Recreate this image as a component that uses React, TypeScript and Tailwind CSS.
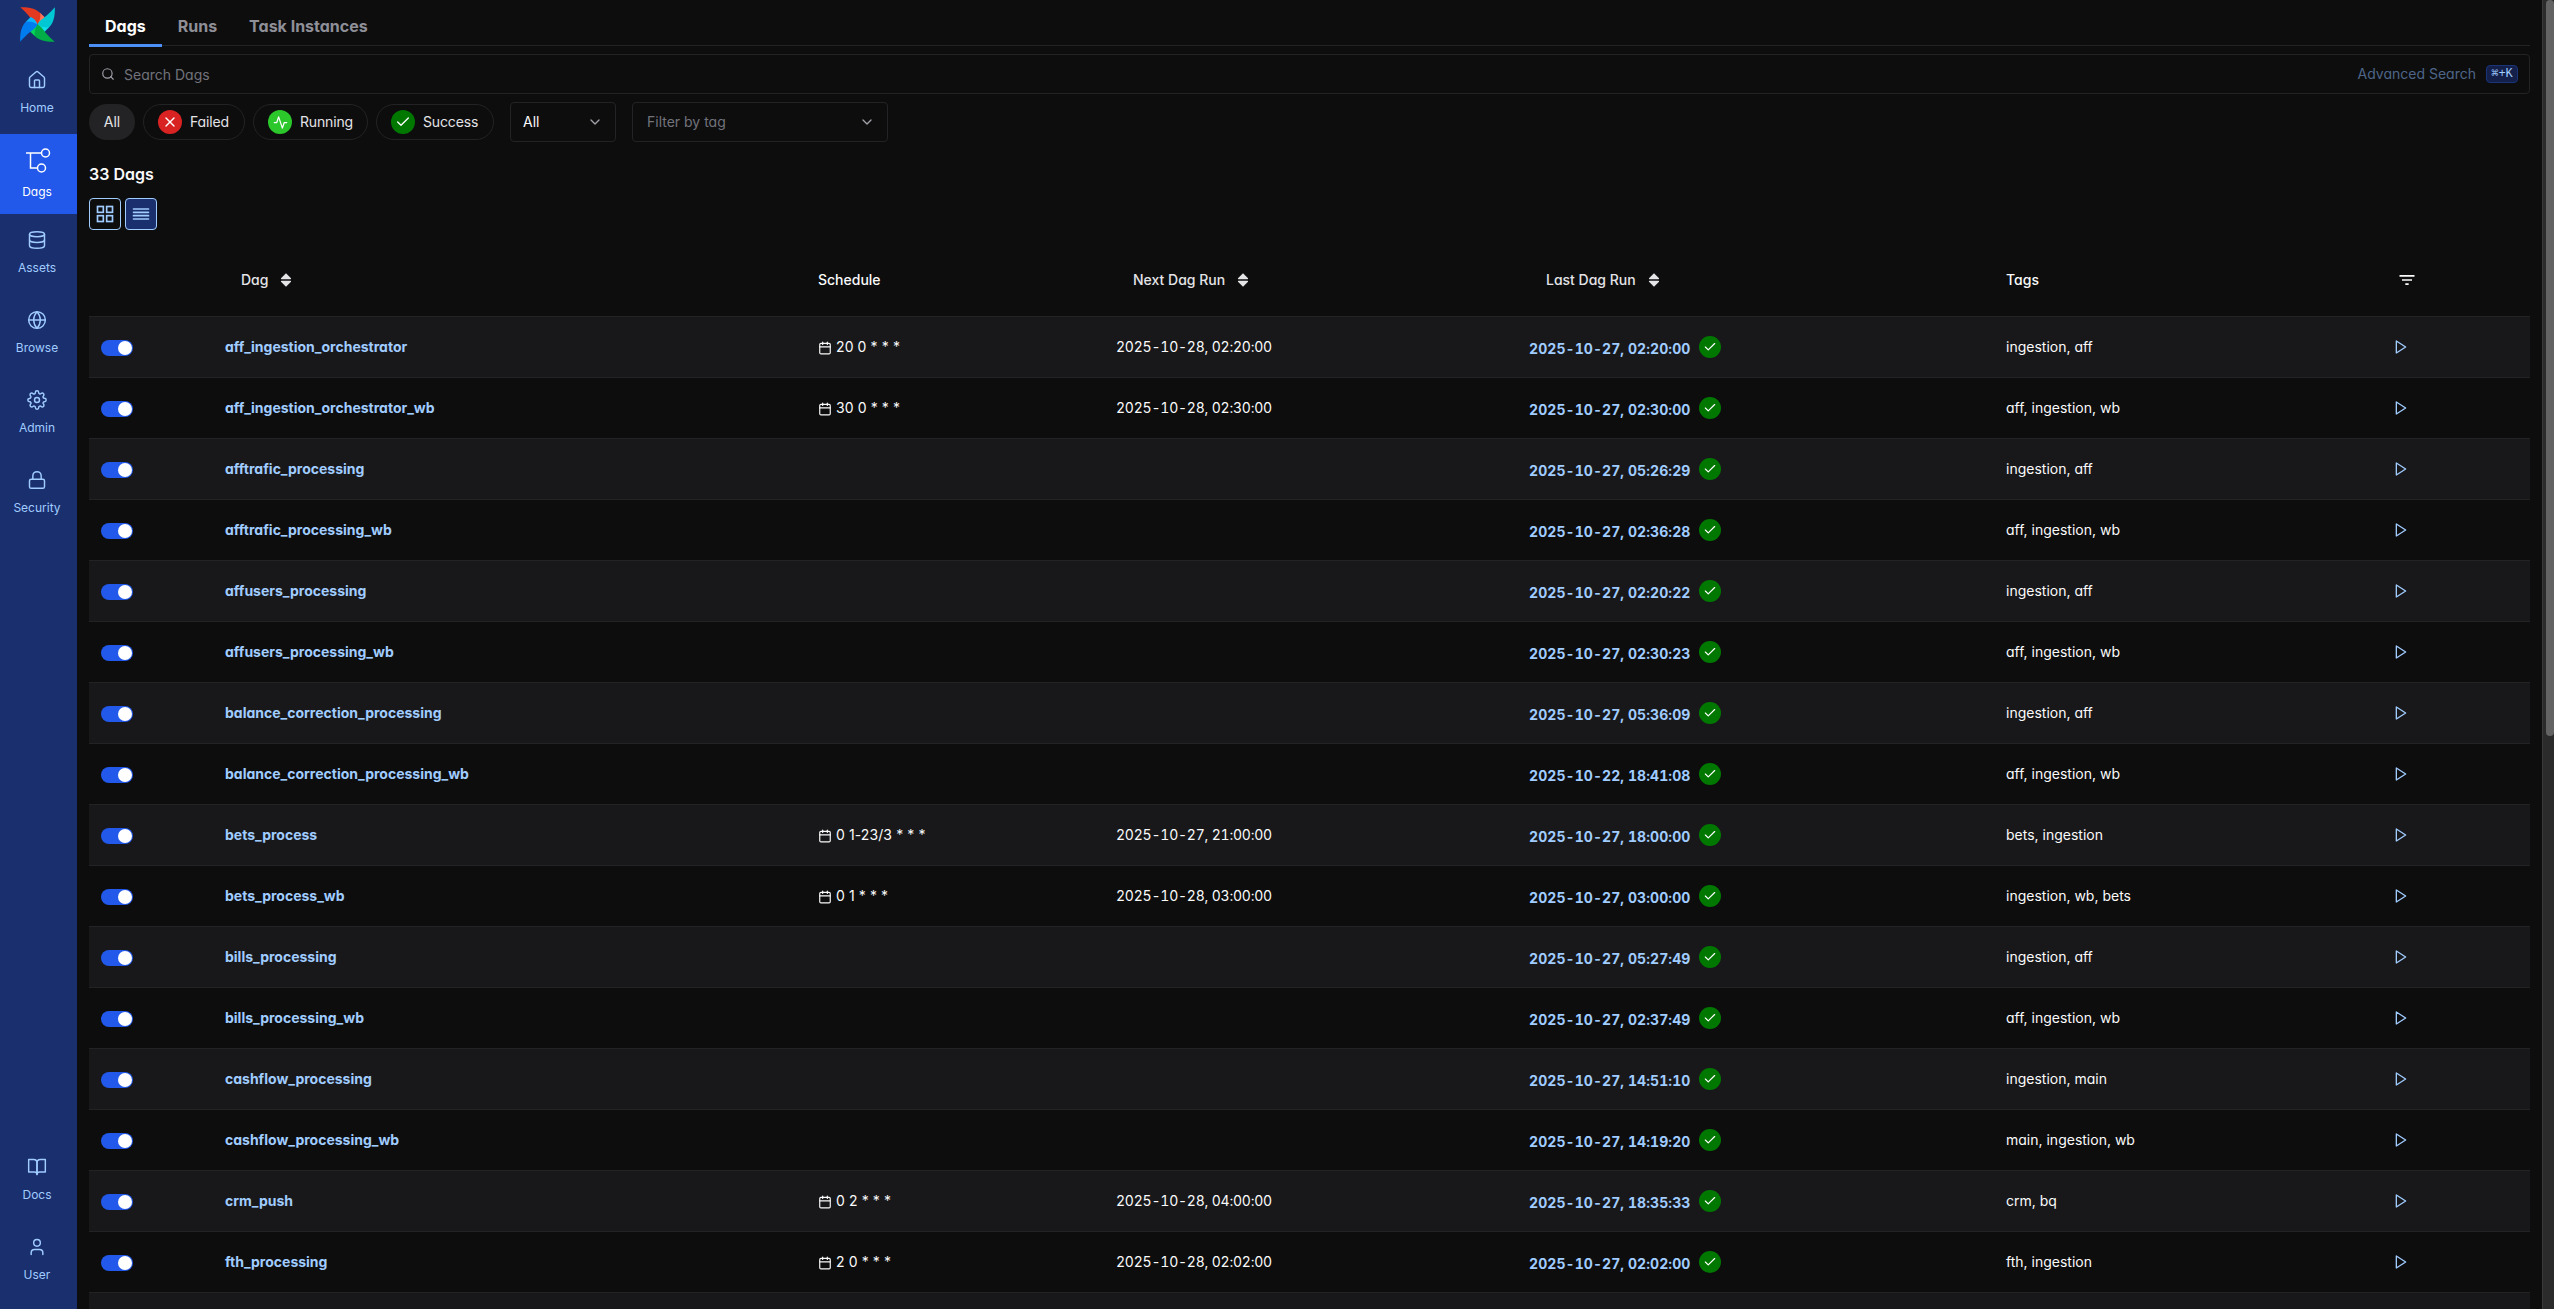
import type { ReactNode } from "react";
import {
  FiActivity,
  FiAlignJustify,
  FiBookOpen,
  FiCalendar,
  FiCheck,
  FiChevronDown,
  FiGlobe,
  FiGrid,
  FiPlay,
  FiSearch,
  FiSettings,
  FiX,
} from "react-icons/fi";
import { LuDatabase, LuHouse, LuLock, LuUser } from "react-icons/lu";
import { MdFilterList } from "react-icons/md";

type Dag = {
  name: string;
  schedule?: string;
  next?: string;
  last: string;
  tags: string;
};

const dags: Dag[] = [
  { name: "aff_ingestion_orchestrator", schedule: "20 0 * * *", next: "2025-10-28, 02:20:00", last: "2025-10-27, 02:20:00", tags: "ingestion, aff" },
  { name: "aff_ingestion_orchestrator_wb", schedule: "30 0 * * *", next: "2025-10-28, 02:30:00", last: "2025-10-27, 02:30:00", tags: "aff, ingestion, wb" },
  { name: "afftrafic_processing", last: "2025-10-27, 05:26:29", tags: "ingestion, aff" },
  { name: "afftrafic_processing_wb", last: "2025-10-27, 02:36:28", tags: "aff, ingestion, wb" },
  { name: "affusers_processing", last: "2025-10-27, 02:20:22", tags: "ingestion, aff" },
  { name: "affusers_processing_wb", last: "2025-10-27, 02:30:23", tags: "aff, ingestion, wb" },
  { name: "balance_correction_processing", last: "2025-10-27, 05:36:09", tags: "ingestion, aff" },
  { name: "balance_correction_processing_wb", last: "2025-10-22, 18:41:08", tags: "aff, ingestion, wb" },
  { name: "bets_process", schedule: "0 1-23/3 * * *", next: "2025-10-27, 21:00:00", last: "2025-10-27, 18:00:00", tags: "bets, ingestion" },
  { name: "bets_process_wb", schedule: "0 1 * * *", next: "2025-10-28, 03:00:00", last: "2025-10-27, 03:00:00", tags: "ingestion, wb, bets" },
  { name: "bills_processing", last: "2025-10-27, 05:27:49", tags: "ingestion, aff" },
  { name: "bills_processing_wb", last: "2025-10-27, 02:37:49", tags: "aff, ingestion, wb" },
  { name: "cashflow_processing", last: "2025-10-27, 14:51:10", tags: "ingestion, main" },
  { name: "cashflow_processing_wb", last: "2025-10-27, 14:19:20", tags: "main, ingestion, wb" },
  { name: "crm_push", schedule: "0 2 * * *", next: "2025-10-28, 04:00:00", last: "2025-10-27, 18:35:33", tags: "crm, bq" },
  { name: "fth_processing", schedule: "2 0 * * *", next: "2025-10-28, 02:02:00", last: "2025-10-27, 02:02:00", tags: "fth, ingestion" },
];

const columns = "grid grid-cols-[124px_593px_299px_413px_476px_1fr]";

const blades = [
  { angle: 0, main: "#e43921", light: "#ff7557" },
  { angle: 90, main: "#00c7d4", light: "#11e1ee" },
  { angle: 180, main: "#00ad46", light: "#04d659" },
  { angle: 270, main: "#017cee", light: "#0cb6ff" },
];

function Logo() {
  return (
    <svg width="35" height="35" viewBox="0 0 35 35">
      {blades.map((b) => (
        <g key={b.angle} transform={`rotate(${b.angle} 17.5 17.5)`}>
          <path fill={b.light} d="M20 5.7 L25 10.6 C24.2 13.4 21.5 16 17.5 17.5 Z" />
          <path
            fill={b.main}
            d="M0.2 0.2 C8 -0.2 15.5 1.2 20 5.7 C21 9.5 20 13.5 17.5 17.5 C11.5 14.5 13 11.5 0.2 0.2 Z"
          />
        </g>
      ))}
    </svg>
  );
}

function DagIcon() {
  return (
    <svg width="28" height="28" viewBox="0 0 28 28" fill="none" stroke="currentColor" strokeWidth="1.5">
      <path d="M3 7h15.5M7.5 7v15h7" />
      <circle cx="22.5" cy="7" r="4" />
      <circle cx="18.5" cy="22" r="4" />
    </svg>
  );
}

function SortIcon() {
  return (
    <svg width="12" height="14" viewBox="0 0 12 14" fill="currentColor">
      <path d="M6 0.2 11 5.2Q11.4 6.2 10.4 6.2H1.6Q0.6 6.2 1 5.2Z" />
      <path d="M6 13.8 11 8.8Q11.4 7.8 10.4 7.8H1.6Q0.6 7.8 1 8.8Z" />
    </svg>
  );
}

function NavItem({ icon, label, active }: { icon: ReactNode; label: string; active?: boolean }) {
  return (
    <a
      className={`flex h-20 w-full flex-col items-center justify-center gap-2.5 pr-[3px] pb-0.5 text-xs ${
        active ? "bg-[#2259ea] text-white" : "text-[#a0ccff]"
      }`}
    >
      {icon}
      <span className="leading-4">{label}</span>
    </a>
  );
}

function Pill({ className, color, icon, label }: { className: string; color: string; icon: ReactNode; label: string }) {
  return (
    <button
      className={`flex h-9 items-center gap-2 rounded-full border border-[#232325] pl-3.5 tracking-[-0.15px] text-[#e4e4e7] ${className}`}
    >
      <span className={`flex size-6 items-center justify-center rounded-full text-white ${color}`}>{icon}</span>
      {label}
    </button>
  );
}

function SortHeader({ label }: { label: string }) {
  return (
    <span className="flex items-center gap-3 pl-7 text-[#e4e4e7]">
      {label}
      <SortIcon />
    </span>
  );
}

function DagRow({ dag }: { dag: Dag }) {
  return (
    <div className={`${columns} h-[61px] shrink-0 items-center border-t border-[#232325] odd:bg-[#18181a]`}>
      <div className="pt-0.5 pl-3">
        <div className="flex h-4 w-8 items-center justify-end rounded-full bg-[#2259ea] pr-px">
          <span className="size-3.5 rounded-full bg-white" />
        </div>
      </div>
      <a className="pl-3 font-bold text-[#a0ccff]">{dag.name}</a>
      <div className="flex items-center gap-1 pl-3">
        {dag.schedule && (
          <>
            <FiCalendar size={14} className="mt-0.5" />
            <span className="tracking-[0.1px]">{dag.schedule}</span>
          </>
        )}
      </div>
      <div className="pl-[11px] tracking-[-0.22px] tabular-nums">{dag.next}</div>
      <div className="flex items-center gap-2 pl-[11px]">
        <a className="w-[162px] pt-1 font-bold tracking-[0.08px] whitespace-nowrap text-[#a0ccff] tabular-nums">
          {dag.last}
        </a>
        <span className="flex size-[22px] items-center justify-center rounded-full bg-[#007800] text-white">
          <FiCheck size={14} />
        </span>
      </div>
      <div className="flex items-center pl-3">
        <span className="w-[387px]">{dag.tags}</span>
        <FiPlay size={16} className="text-[#a0ccff]" />
      </div>
    </div>
  );
}

export default function App() {
  return (
    <div className="flex h-[1309px] w-[2554px] overflow-hidden bg-[#0d0d0e] font-['Inter',sans-serif] text-sm text-[#fafafa] [font-feature-settings:'cv11']">
      <nav className="flex w-[77px] shrink-0 flex-col items-center justify-between bg-[#1a2f6e] pb-2">
        <div className="flex w-full flex-col items-center">
          <div className="flex h-[54px] w-full pt-[7px] pl-5">
            <Logo />
          </div>
          <NavItem icon={<LuHouse size={20} strokeWidth={1.75} />} label="Home" />
          <NavItem icon={<DagIcon />} label="Dags" active />
          <NavItem icon={<LuDatabase size={20} strokeWidth={1.75} />} label="Assets" />
          <NavItem icon={<FiGlobe size={20} strokeWidth={1.75} />} label="Browse" />
          <NavItem icon={<FiSettings size={20} strokeWidth={1.75} />} label="Admin" />
          <NavItem icon={<LuLock size={20} strokeWidth={1.75} />} label="Security" />
        </div>
        <div className="flex w-full flex-col items-center">
          <NavItem icon={<FiBookOpen size={20} strokeWidth={1.75} />} label="Docs" />
          <NavItem icon={<LuUser size={20} strokeWidth={1.75} />} label="User" />
        </div>
      </nav>

      <main className="flex min-w-0 flex-1 flex-col px-3">
        <div className="flex h-[46px] shrink-0 border-b border-[#232325] text-base font-bold text-[#8f8f98]">
          <a className="h-[47px] border-b-3 border-[#4b8ff7] px-4 pt-[14px] text-white">Dags</a>
          <a className="px-4 pt-[14px]">Runs</a>
          <a className="px-4 pt-[14px]">Task Instances</a>
        </div>

        <div className="mt-2 flex h-10 shrink-0 items-center rounded border border-[#232325] px-[11px]">
          <FiSearch size={14} className="text-[#a1a1aa]" />
          <span className="ml-[9px] flex-1 pt-0.5 text-[#72727b]">Search Dags</span>
          <span className="mr-2.5 text-[#4d6688]">Advanced Search</span>
          <kbd className="flex h-[18px] w-8 items-center justify-center rounded border border-[#1a3478] bg-[#14204a] font-['Liberation_Mono',monospace] text-xs text-[#a0ccff]">
            ⌘+K
          </kbd>
        </div>

        <div className="mt-2 flex h-10 shrink-0 items-center">
          <div className="flex gap-2">
            <button className="h-9 w-[46px] rounded-full bg-[#232325] text-[#e4e4e7]">All</button>
            <Pill className="w-[102px]" color="bg-[#d92323]" icon={<FiX size={16} />} label="Failed" />
            <Pill className="w-[115px]" color="bg-[#2bc72b]" icon={<FiActivity size={15} />} label="Running" />
            <Pill className="w-[118px]" color="bg-[#007800]" icon={<FiCheck size={16} />} label="Success" />
          </div>
          <div className="ml-4 flex h-10 w-[106px] items-center justify-between rounded border border-[#232325] px-3">
            All
            <FiChevronDown size={16} className="text-[#a1a1aa]" />
          </div>
          <div className="ml-4 flex h-10 w-64 items-center justify-between rounded border border-[#232325] pr-3 pl-3.5 text-[#72727b]">
            Filter by tag
            <FiChevronDown size={16} className="text-[#a1a1aa]" />
          </div>
        </div>

        <h2 className="mt-5 text-base font-semibold">33 Dags</h2>

        <div className="mt-3 flex shrink-0 gap-1 text-[#a0ccff]">
          <button className="flex size-8 items-center justify-center rounded border border-[#a0ccff]">
            <FiGrid size={20} strokeLinejoin="miter" />
          </button>
          <button className="flex size-8 items-center justify-center rounded border border-[#a0ccff] bg-[#1a2f6e]">
            <FiAlignJustify size={20} />
          </button>
        </div>

        <div className={`${columns} mt-3 h-[74px] shrink-0 items-center pt-0.5 font-medium`}>
          <span />
          <SortHeader label="Dag" />
          <span className="pl-3">Schedule</span>
          <SortHeader label="Next Dag Run" />
          <SortHeader label="Last Dag Run" />
          <div className="flex items-center pl-3">
            <span className="w-[391px]">Tags</span>
            <MdFilterList size={20} />
          </div>
        </div>
        <div className="flex shrink-0 flex-col">
          {dags.map((dag) => (
            <DagRow key={dag.name} dag={dag} />
          ))}
          <div className="h-[61px] border-t border-[#232325] bg-[#18181a]" />
        </div>
      </main>

      <div className="w-3 shrink-0 border-l border-[#3a3a3a] bg-[#2b2b2b] pl-[3px]">
        <div className="h-[736px] rounded-full bg-[#636363]" />
      </div>
    </div>
  );
}
